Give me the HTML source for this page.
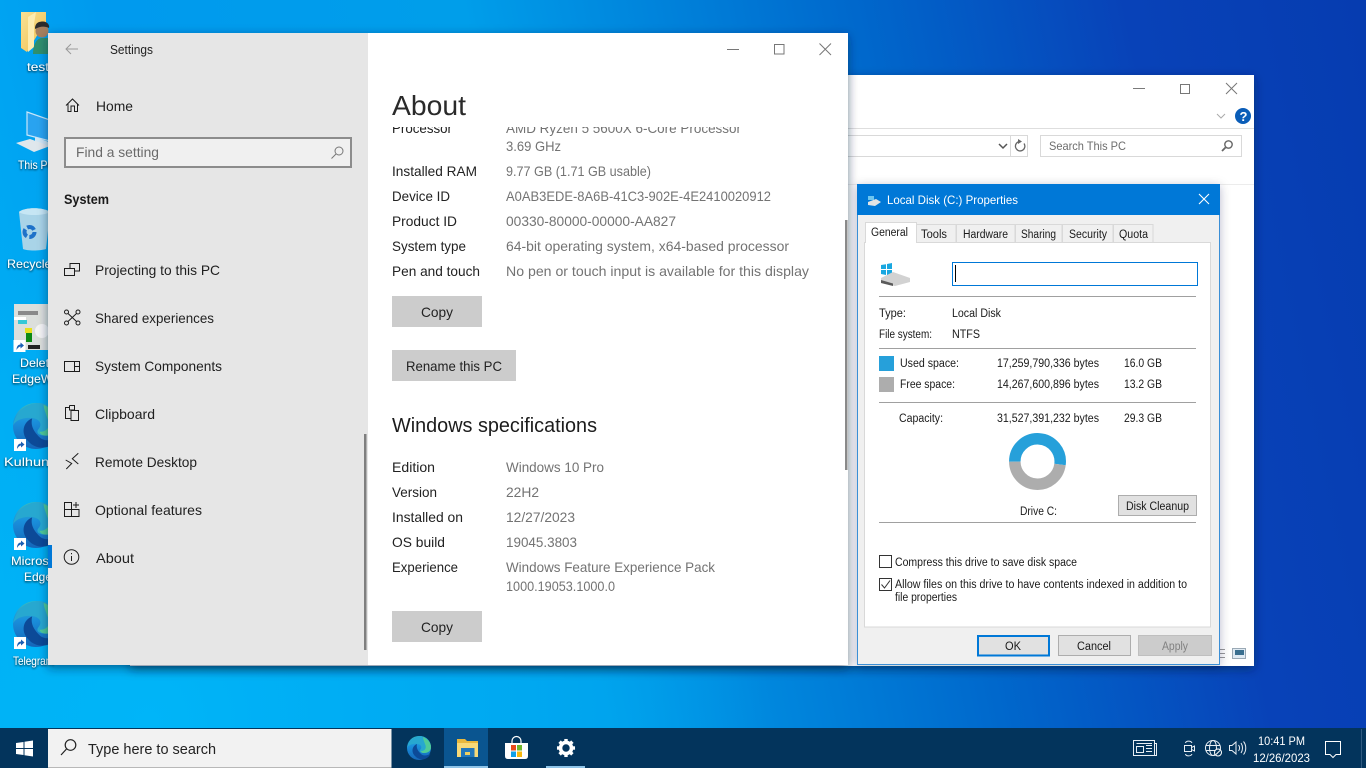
<!DOCTYPE html>
<html><head><meta charset="utf-8"><title>Settings</title>
<style>
html,body{margin:0;padding:0;width:1366px;height:768px;overflow:hidden;background:#0078d7}
svg{display:block;position:absolute;left:0;top:0}
text{font-family:"Liberation Sans",sans-serif;white-space:pre}
.n{font-size:14px;fill:#1f1f1f}
.l{font-size:14px;fill:#222}
.v{font-size:14px;fill:#737373}
.p{font-size:11.5px;fill:#1a1a1a}
.d{font-size:12px;fill:#fff}
.i{fill:none;stroke:#1c1c1c;stroke-width:1}
</style></head><body>
<svg width="1366" height="768" viewBox="0 0 1366 768" xmlns="http://www.w3.org/2000/svg">
<defs>
<linearGradient id="wall" gradientUnits="userSpaceOnUse" x1="-137" y1="28" x2="1312" y2="-268">
<stop offset="0" stop-color="#00b0f6"/><stop offset=".16" stop-color="#009aee"/><stop offset=".4" stop-color="#009eea"/><stop offset=".66" stop-color="#0068cc"/><stop offset=".84" stop-color="#0842b8"/><stop offset="1" stop-color="#063cb0"/>
</linearGradient>
<radialGradient id="glow" gradientUnits="userSpaceOnUse" cx="150" cy="720" r="620">
<stop offset="0" stop-color="#00b6f8" stop-opacity=".95"/><stop offset=".6" stop-color="#00b0f4" stop-opacity=".6"/><stop offset="1" stop-color="#00a8f0" stop-opacity="0"/>
</radialGradient>
<linearGradient id="eg" x1="0" y1="0" x2="0" y2="1"><stop offset="0" stop-color="#38bcc0"/><stop offset=".4" stop-color="#1a90dc"/><stop offset="1" stop-color="#1565b8"/></linearGradient>
<linearGradient id="fold" x1="0" y1="0" x2="1" y2="1"><stop offset="0" stop-color="#f9e196"/><stop offset="1" stop-color="#eebf4a"/></linearGradient>
<filter id="ts" x="-20%" y="-30%" width="140%" height="160%"><feDropShadow dx="0" dy="1" stdDeviation="1" flood-color="#000" flood-opacity=".9"/></filter>
<filter id="ws" x="-5%" y="-5%" width="110%" height="110%"><feDropShadow dx="0" dy="3" stdDeviation="5" flood-color="#001a40" flood-opacity=".55"/></filter>
<filter id="ds" x="-8%" y="-8%" width="116%" height="116%"><feDropShadow dx="0" dy="2" stdDeviation="5" flood-color="#001a40" flood-opacity=".28"/></filter>
<clipPath id="cp"><rect x="380" y="127" width="460" height="60"/></clipPath>
<symbol id="edge" viewBox="-12 -12 24 24" overflow="visible">
<circle r="12" fill="url(#eg)"/>
<path d="M-12 0C-11-7-5-12 1-12 7-12 12-7 12-1 12 3 9 5 5 5 2 5 0 4 1 2 3 0 3-3-1-4-6-5-11-3-12 0Z" fill="#27a8d0"/>
<path d="M4-11C9-9 12-5 12-1 12 3 9 5 5 5 3 5 2 4 2 3 6 3 8 0 6-4 5-7 4-9 4-11Z" fill="#4fcb98"/>
<path d="M-2-4C-7-2-8 4-4 8-1 11.500 4 12 7 10.500 9 9.500 10.500 8 11.500 5.500 8 8 4 8 2 6-1 3-3 0-2-4Z" fill="#0c4a98"/>
</symbol>
<symbol id="sc" viewBox="0 0 12 12"><rect width="12" height="12" fill="#fff"/><path d="M3 10C3 6 5 4.500 7 4.500V2.500L10.500 5.500 7 8.500V6.500C6 6.500 4.500 7.500 3 10Z" fill="#1a5fb4"/></symbol>
</defs>

<!-- wallpaper -->
<rect width="1366" height="768" fill="url(#wall)"/>
<rect width="800" height="768" fill="url(#glow)"/>

<!-- desktop icons -->
<g>
<path d="M21 12H46V34H38L27 52 21 48Z" fill="url(#fold)"/>
<path d="M36 12 28 17V52L34 47V24Z" fill="#fcecb0"/>
<path d="M33 54C33 44 37 38 42 38H50V54Z" fill="#2f8f6e"/>
<circle cx="42" cy="31" r="6.500" fill="#a5805f"/><path d="M35 29C35 22 40 21.500 43 21.500 47 21.500 50 25 49 28 45 26 40 26 35 29Z" fill="#2b2b2b"/>
<path d="M27 112 50 120V141L27 135Z" fill="#29a3f0" stroke="#c6e6fa" stroke-width="1.200"/>
<path d="M35 137 49 142V147L35 143Z" fill="#cfe6f5"/>
<path d="M16 143 30 139 50 146 34 152Z" fill="#dfe7ec"/>
<path d="M19 212C24 207 44 207 50 212L46 249C40 251 27 251 23 249Z" fill="#a9d4e8"/>
<path d="M19 212C24 216 44 216 50 212 44 207 24 207 19 212Z" fill="#c6e6f4"/>
<circle cx="29.500" cy="232" r="5" fill="none" stroke="#1e72c9" stroke-width="4" stroke-dasharray="8 2.500"/>
<rect x="14" y="304" width="36" height="46" fill="#dcdfdc"/>
<rect x="18" y="311" width="20" height="4" fill="#8a8a8a"/><rect x="14" y="317" width="12" height="3" fill="#fff"/><rect x="18" y="320" width="9" height="4" fill="#35c8d8"/><rect x="25" y="328" width="7" height="5" fill="#e8e020"/><rect x="26" y="333" width="6" height="9" fill="#0d8a14"/><circle cx="42" cy="331" r="7" fill="#f4f4f4"/><rect x="28" y="345" width="12" height="4" fill="#222"/>
<use href="#sc" x="13.500" y="340" width="12" height="12"/>
<use href="#edge" x="13" y="403" width="46" height="46"/><use href="#sc" x="14" y="439" width="12" height="12"/>
<use href="#edge" x="13" y="502" width="46" height="46"/><use href="#sc" x="14" y="538" width="12" height="12"/>
<use href="#edge" x="13" y="601" width="46" height="46"/><use href="#sc" x="14" y="637" width="12" height="12"/>
</g>
<g filter="url(#ts)">
<text class="d" x="27" y="71" textLength="22" lengthAdjust="spacingAndGlyphs">test</text>
<text class="d" x="18" y="169" textLength="37" lengthAdjust="spacingAndGlyphs">This PC</text>
<text class="d" x="7" y="268" textLength="66" lengthAdjust="spacingAndGlyphs">Recycle Bin</text>
<text class="d" x="20" y="367" textLength="36" lengthAdjust="spacingAndGlyphs">Delete</text>
<text class="d" x="12" y="383" textLength="54" lengthAdjust="spacingAndGlyphs">EdgeWeb</text>
<text class="d" x="4" y="466" textLength="62" lengthAdjust="spacingAndGlyphs">Kulhunter</text>
<text class="d" x="11" y="565" textLength="52" lengthAdjust="spacingAndGlyphs">Microsoft</text>
<text class="d" x="24" y="581" textLength="28" lengthAdjust="spacingAndGlyphs">Edge</text>
<text class="d" x="13" y="665" textLength="41" lengthAdjust="spacingAndGlyphs">Telegram</text>
</g>

<!-- Explorer window behind -->
<rect x="130" y="75" width="1124" height="591" fill="#fff" filter="url(#ws)"/>
<path d="M1133 88.500H1145" stroke="#7a7a7a" fill="none"/>
<rect x="1180.500" y="84.500" width="9" height="9" fill="none" stroke="#777"/>
<path d="M1226 83 1237 94M1237 83 1226 94" stroke="#777" fill="none"/>
<path d="M1217 114 1221 118 1225 114" stroke="#aaa" fill="none"/>
<circle cx="1243" cy="116" r="8" fill="#0a5db8"/>
<text x="1239.500" y="121" style="font-size:13px;font-weight:bold;fill:#fff">?</text>
<path d="M848 128.500H1254" stroke="#dedede"/>
<rect x="840" y="135.500" width="187.500" height="21" fill="#fff" stroke="#d9d9d9"/>
<path d="M1010.500 135V157" stroke="#d9d9d9"/>
<path d="M999 144 1003 148 1007 144" stroke="#555" stroke-width="1.500" fill="none"/>
<path d="M1024 143.500A4.700 4.700 0 1 1 1020 141.500" stroke="#666" stroke-width="1.300" fill="none"/><path d="M1018 139 1022 141.500 1018 144Z" fill="#666"/>
<rect x="1040.500" y="135.500" width="201" height="21" fill="#fff" stroke="#d9d9d9"/>
<text x="1049" y="150" textLength="77" lengthAdjust="spacingAndGlyphs" style="font-size:12px;fill:#6d6d6d">Search This PC</text>
<circle cx="1228.500" cy="144.500" r="3.700" fill="none" stroke="#666" stroke-width="1.400"/><path d="M1225.500 147.500 1222 151" stroke="#666" stroke-width="1.800"/>
<path d="M848 184.500H1254" stroke="#ececec"/>
<path d="M1217 649.500H1225M1217 653.500H1225M1217 657.500H1225" stroke="#999"/>
<rect x="1232.500" y="648.500" width="13" height="10" fill="#dfeaf3" stroke="#9aa9b5"/><rect x="1235" y="650" width="9" height="5" fill="#3a6f8f"/>

<!-- Settings window -->
<rect x="48" y="33" width="800" height="632" fill="#fff" filter="url(#ws)"/>
<rect x="48" y="33" width="320" height="632" fill="#e6e6e6"/>
<rect x="48" y="545" width="4" height="23" fill="#0078d7"/>
<path d="M78 49H66M71 44 66 49 71 54" stroke="#9a9a9a" fill="none"/>
<text x="110" y="54" textLength="43" lengthAdjust="spacingAndGlyphs" style="font-size:12.500px;fill:#222">Settings</text>
<path d="M66 105.500 72.500 99 79 105.500M68 104V111.500H71V106H74.500V111.500H77.500V104" class="i"/>
<text class="n" x="96" y="111" textLength="37" lengthAdjust="spacingAndGlyphs">Home</text>
<rect x="65" y="138" width="286" height="29" fill="#f0f0f0" stroke="#8c8c8c" stroke-width="2"/>
<text x="76" y="157" textLength="83" lengthAdjust="spacingAndGlyphs" style="font-size:14px;fill:#6a6a6a">Find a setting</text>
<circle cx="339" cy="151" r="4" fill="none" stroke="#777"/><path d="M336 154 331.500 158.500" stroke="#777" fill="none"/>
<text x="64" y="204" textLength="45" lengthAdjust="spacingAndGlyphs" style="font-size:14px;font-weight:bold;fill:#1a1a1a">System</text>

<path class="i" d="M70 268V263.500H79.500V271H74.500M64.500 268.500H74.500V275.500H64.500Z"/>
<text class="n" x="95" y="275" textLength="125" lengthAdjust="spacingAndGlyphs">Projecting to this PC</text>
<path class="i" d="M68 313.500 76.500 321.500M76.500 313.500 68 321.500"/><circle class="i" cx="66.500" cy="312" r="2"/><circle class="i" cx="78" cy="312" r="2"/><circle class="i" cx="66.500" cy="323" r="2"/><circle class="i" cx="78" cy="323" r="2"/>
<text class="n" x="95" y="323" textLength="119" lengthAdjust="spacingAndGlyphs">Shared experiences</text>
<path class="i" d="M64.500 361.500H79.500V371.500H64.500ZM74.500 361.500V371.500M74.500 366.500H79.500"/>
<text class="n" x="95" y="371" textLength="127" lengthAdjust="spacingAndGlyphs">System Components</text>
<path class="i" d="M71 418.500H65.500V407.500H69.500M74.500 407.500V409.500M69.500 405.500H74.500V410M69.500 405.500V410H74.500M71 410.500H78.500V420.500H71Z"/>
<text class="n" x="95" y="419" textLength="60" lengthAdjust="spacingAndGlyphs">Clipboard</text>
<path class="i" d="M65.700 460 71.700 463.500 66.300 469M78.300 453.300 72.300 458.700 78.300 464"/>
<text class="n" x="95" y="467" textLength="102" lengthAdjust="spacingAndGlyphs">Remote Desktop</text>
<path class="i" d="M64.500 502.500H71.500V516.500H64.500ZM64.500 509.500H79V516.500H71.500M76 502V508M73 505H79"/>
<text class="n" x="95" y="515" textLength="107" lengthAdjust="spacingAndGlyphs">Optional features</text>
<circle class="i" cx="71.500" cy="557" r="7.300"/><path class="i" d="M71.500 556V561M71.500 553V554.200"/>
<text class="n" x="96" y="563" textLength="38" lengthAdjust="spacingAndGlyphs">About</text>
<rect x="364" y="434" width="2.500" height="216" fill="#7f7f7f"/>

<!-- right pane -->
<path d="M727 49.500H739" stroke="#777" fill="none"/>
<rect x="774.500" y="44.500" width="9.500" height="9.500" fill="none" stroke="#777"/>
<path d="M819.500 43.500 831 55M831 43.500 819.500 55" stroke="#777" fill="none"/>
<text x="392" y="115" textLength="74" lengthAdjust="spacingAndGlyphs" style="font-size:27.500px;fill:#2a2a2a">About</text>
<g clip-path="url(#cp)">
<text class="l" x="392" y="133" textLength="60" lengthAdjust="spacingAndGlyphs">Processor</text>
<text class="v" x="506" y="133" textLength="235" lengthAdjust="spacingAndGlyphs">AMD Ryzen 5 5600X 6-Core Processor</text>
</g>
<text class="v" x="506" y="151" textLength="55" lengthAdjust="spacingAndGlyphs">3.69 GHz</text>
<text class="l" x="392" y="176" textLength="85" lengthAdjust="spacingAndGlyphs">Installed RAM</text>
<text class="v" x="506" y="176" textLength="145" lengthAdjust="spacingAndGlyphs">9.77 GB (1.71 GB usable)</text>
<text class="l" x="392" y="201" textLength="58" lengthAdjust="spacingAndGlyphs">Device ID</text>
<text class="v" x="506" y="201" textLength="265" lengthAdjust="spacingAndGlyphs">A0AB3EDE-8A6B-41C3-902E-4E2410020912</text>
<text class="l" x="392" y="226" textLength="65" lengthAdjust="spacingAndGlyphs">Product ID</text>
<text class="v" x="506" y="226" textLength="170" lengthAdjust="spacingAndGlyphs">00330-80000-00000-AA827</text>
<text class="l" x="392" y="251" textLength="74" lengthAdjust="spacingAndGlyphs">System type</text>
<text class="v" x="506" y="251" textLength="283" lengthAdjust="spacingAndGlyphs">64-bit operating system, x64-based processor</text>
<text class="l" x="392" y="276" textLength="88" lengthAdjust="spacingAndGlyphs">Pen and touch</text>
<text class="v" x="506" y="276" textLength="303" lengthAdjust="spacingAndGlyphs">No pen or touch input is available for this display</text>
<rect x="392" y="296" width="90" height="31" fill="#ccc"/>
<text class="l" x="421" y="317" textLength="32" lengthAdjust="spacingAndGlyphs">Copy</text>
<rect x="392" y="350" width="124" height="31" fill="#ccc"/>
<text class="l" x="406" y="371" textLength="96" lengthAdjust="spacingAndGlyphs">Rename this PC</text>
<text x="392" y="432" textLength="205" lengthAdjust="spacingAndGlyphs" style="font-size:20px;fill:#1c1c1c">Windows specifications</text>
<text class="l" x="392" y="472" textLength="43" lengthAdjust="spacingAndGlyphs">Edition</text>
<text class="v" x="506" y="472" textLength="98" lengthAdjust="spacingAndGlyphs">Windows 10 Pro</text>
<text class="l" x="392" y="497" textLength="45" lengthAdjust="spacingAndGlyphs">Version</text>
<text class="v" x="506" y="497" textLength="33" lengthAdjust="spacingAndGlyphs">22H2</text>
<text class="l" x="392" y="522" textLength="71" lengthAdjust="spacingAndGlyphs">Installed on</text>
<text class="v" x="506" y="522" textLength="69" lengthAdjust="spacingAndGlyphs">12/27/2023</text>
<text class="l" x="392" y="547" textLength="53" lengthAdjust="spacingAndGlyphs">OS build</text>
<text class="v" x="506" y="547" textLength="71" lengthAdjust="spacingAndGlyphs">19045.3803</text>
<text class="l" x="392" y="572" textLength="66" lengthAdjust="spacingAndGlyphs">Experience</text>
<text class="v" x="506" y="572" textLength="209" lengthAdjust="spacingAndGlyphs">Windows Feature Experience Pack</text>
<text class="v" x="506" y="591" textLength="109" lengthAdjust="spacingAndGlyphs">1000.19053.1000.0</text>
<rect x="392" y="611" width="90" height="31" fill="#ccc"/>
<text class="l" x="421" y="632" textLength="32" lengthAdjust="spacingAndGlyphs">Copy</text>
<rect x="845" y="220" width="2.500" height="250" fill="#8a8a8a"/>

<!-- Properties dialog -->
<rect x="857.500" y="184.500" width="362" height="480" fill="#f0f0f0" stroke="#3a8fd6" filter="url(#ds)"/>
<rect x="857" y="184" width="363" height="31" fill="#0078d7"/>
<path d="M868 196H874V200H868Z" fill="#6ec6f0"/><path d="M868 202 876 199 881 202 875 206 868 205Z" fill="#e4e4e4"/>
<text x="887" y="204" textLength="131" lengthAdjust="spacingAndGlyphs" style="font-size:12px;fill:#fff">Local Disk (C:) Properties</text>
<path d="M1199 194 1209 204M1209 194 1199 204" stroke="#fff" stroke-width="1.100" fill="none"/>

<rect x="864.500" y="242.500" width="346" height="384.500" fill="#fff" stroke="#d9d9d9"/>
<g fill="#f0f0f0" stroke="#d9d9d9">
<rect x="916.500" y="224.500" width="39.500" height="18"/>
<rect x="956.500" y="224.500" width="58.500" height="18"/>
<rect x="1015.500" y="224.500" width="46.500" height="18"/>
<rect x="1062.500" y="224.500" width="50.500" height="18"/>
<rect x="1113.500" y="224.500" width="39.500" height="18"/>
</g>
<path d="M865.500 243V222.500H916.500V243" fill="#fff" stroke="#d9d9d9"/>
<text class="p" x="871" y="236" textLength="37" lengthAdjust="spacingAndGlyphs">General</text>
<text class="p" x="921" y="238" textLength="26" lengthAdjust="spacingAndGlyphs">Tools</text>
<text class="p" x="963" y="238" textLength="45" lengthAdjust="spacingAndGlyphs">Hardware</text>
<text class="p" x="1021" y="238" textLength="35" lengthAdjust="spacingAndGlyphs">Sharing</text>
<text class="p" x="1069" y="238" textLength="38" lengthAdjust="spacingAndGlyphs">Security</text>
<text class="p" x="1119" y="238" textLength="29" lengthAdjust="spacingAndGlyphs">Quota</text>

<path d="M881 265 886 264.200V269H881ZM887 264 892 263V269H887ZM881 270H886V275L881 274ZM887 270H892V276L887 275Z" fill="#19a7e0"/>
<path d="M881 278 893 272 910 278V282L895 286 881 283Z" fill="#d2d2d2"/><path d="M881 280 893 283.500V286L881 283Z" fill="#5a5a5a"/>
<rect x="952.500" y="262.500" width="245" height="23" fill="#fff" stroke="#0078d7"/>
<path d="M955.500 265V282" stroke="#000"/>
<g stroke="#a0a0a0"><path d="M879 296.500H1196M879 348.500H1196M879 402.500H1196M879 522.500H1196"/></g>
<text class="p" x="879" y="317" textLength="27" lengthAdjust="spacingAndGlyphs">Type:</text>
<text class="p" x="952" y="317" textLength="49" lengthAdjust="spacingAndGlyphs">Local Disk</text>
<text class="p" x="879" y="338" textLength="53" lengthAdjust="spacingAndGlyphs">File system:</text>
<text class="p" x="952" y="338" textLength="28" lengthAdjust="spacingAndGlyphs">NTFS</text>
<rect x="879" y="356" width="15" height="15" fill="#26a0da"/>
<rect x="879" y="377" width="15" height="15" fill="#adadad"/>
<text class="p" x="900" y="367" textLength="59" lengthAdjust="spacingAndGlyphs">Used space:</text>
<text class="p" x="997" y="367" textLength="102" lengthAdjust="spacingAndGlyphs">17,259,790,336 bytes</text>
<text class="p" x="1124" y="367" textLength="38" lengthAdjust="spacingAndGlyphs">16.0 GB</text>
<text class="p" x="900" y="388" textLength="55" lengthAdjust="spacingAndGlyphs">Free space:</text>
<text class="p" x="997" y="388" textLength="102" lengthAdjust="spacingAndGlyphs">14,267,600,896 bytes</text>
<text class="p" x="1124" y="388" textLength="38" lengthAdjust="spacingAndGlyphs">13.2 GB</text>
<text class="p" x="899" y="422" textLength="44" lengthAdjust="spacingAndGlyphs">Capacity:</text>
<text class="p" x="997" y="422" textLength="102" lengthAdjust="spacingAndGlyphs">31,527,391,232 bytes</text>
<text class="p" x="1124" y="422" textLength="38" lengthAdjust="spacingAndGlyphs">29.3 GB</text>
<path d="M1014.800 461.700A22.700 22.700 0 1 1 1060 464.500" fill="none" stroke="#26a0da" stroke-width="11.500"/>
<path d="M1060 464.500A22.700 22.700 0 0 1 1014.800 461.700" fill="none" stroke="#adadad" stroke-width="11.500"/>
<text class="p" x="1020" y="515" textLength="37" lengthAdjust="spacingAndGlyphs">Drive C:</text>
<rect x="1118.500" y="495.500" width="78" height="20" fill="#e1e1e1" stroke="#adadad"/>
<text class="p" x="1126" y="510" textLength="63" lengthAdjust="spacingAndGlyphs">Disk Cleanup</text>
<rect x="879.500" y="555.500" width="12" height="12" fill="#fff" stroke="#333"/>
<text class="p" x="895" y="566" textLength="182" lengthAdjust="spacingAndGlyphs">Compress this drive to save disk space</text>
<rect x="879.500" y="578.500" width="12" height="12" fill="#fff" stroke="#333"/>
<path d="M881.500 584.500 884.500 588 890 580.500" fill="none" stroke="#333"/>
<text class="p" x="895" y="588" textLength="292" lengthAdjust="spacingAndGlyphs">Allow files on this drive to have contents indexed in addition to</text>
<text class="p" x="895" y="601" textLength="62" lengthAdjust="spacingAndGlyphs">file properties</text>
<rect x="978" y="636" width="71" height="19.500" fill="#e1e1e1" stroke="#0078d7" stroke-width="2"/>
<text class="p" x="1005" y="650" textLength="16" lengthAdjust="spacingAndGlyphs">OK</text>
<rect x="1058.500" y="635.500" width="72" height="20" fill="#e1e1e1" stroke="#adadad"/>
<text class="p" x="1077" y="650" textLength="34" lengthAdjust="spacingAndGlyphs">Cancel</text>
<rect x="1138.500" y="635.500" width="73" height="20" fill="#ccc" stroke="#bfbfbf"/>
<text x="1162" y="650" textLength="26" lengthAdjust="spacingAndGlyphs" style="font-size:11.500px;fill:#808080">Apply</text>

<!-- taskbar -->
<rect y="728" width="1366" height="40" fill="#03345c"/>
<path d="M16 743 23.500 742V748H16ZM24.500 741.800 33 740.500V748H24.500ZM16 749H23.500V755L16 754ZM24.500 749H33V756.500L24.500 755.200Z" fill="#fff"/>
<rect x="48" y="729" width="343.500" height="39" fill="#f2f2f2"/>
<rect x="48" y="767" width="343.500" height="1" fill="#b8b8b8"/>
<circle cx="70.500" cy="745" r="5.300" fill="none" stroke="#222" stroke-width="1.200"/><path d="M66.500 749 61 755" stroke="#222" stroke-width="1.200" fill="none"/>
<text x="88" y="754" textLength="128" lengthAdjust="spacingAndGlyphs" style="font-size:15px;fill:#222">Type here to search</text>
<use href="#edge" x="407" y="736" width="24" height="24"/>
<rect x="444" y="728" width="44" height="40" fill="#0a5590"/>
<rect x="444" y="766" width="44" height="2" fill="#8fc4e8"/>
<path d="M457 739H465L467 741H478V757H457Z" fill="#e8b83e"/><path d="M457 743H478V757H457Z" fill="#f7d978"/><rect x="461" y="748" width="13.500" height="9" fill="#2277bb"/><rect x="465" y="752" width="5" height="3" fill="#f0d060"/>
<path d="M505 743H528V756Q528 759 525 759H508Q505 759 505 756Z" fill="#fff"/><path d="M512 743V741A4.500 4.500 0 0 1 521 741V743" fill="none" stroke="#fff" stroke-width="1.200"/>
<rect x="511" y="745" width="5" height="5.500" fill="#e74a1d"/><rect x="517" y="745" width="5" height="5.500" fill="#6fb62c"/><rect x="511" y="751.500" width="5" height="5.500" fill="#12a0e8"/><rect x="517" y="751.500" width="5" height="5.500" fill="#f8b80d"/>
<g transform="translate(566 748) scale(.95)">
<circle r="5.800" fill="none" stroke="#fff" stroke-width="3.800"/>
<g fill="#fff"><rect x="-1.800" y="-9.500" width="3.600" height="4"/><rect x="-1.800" y="5.500" width="3.600" height="4"/><rect x="-9.500" y="-1.800" width="4" height="3.600"/><rect x="5.500" y="-1.800" width="4" height="3.600"/>
<rect x="-1.800" y="-9.500" width="3.600" height="4" transform="rotate(45)"/><rect x="-1.800" y="5.500" width="3.600" height="4" transform="rotate(45)"/><rect x="-9.500" y="-1.800" width="4" height="3.600" transform="rotate(45)"/><rect x="5.500" y="-1.800" width="4" height="3.600" transform="rotate(45)"/></g>
</g>
<rect x="546" y="766" width="39" height="2" fill="#8fc4e8"/>
<!-- tray -->
<g fill="none" stroke="#e8eef4" stroke-width="1">
<path d="M1133.500 740.500H1154.500V755.500H1133.500ZM1154.500 743.500H1156.500V755.500H1154.500M1136.500 746.500H1143.500V752.500H1136.500ZM1146 745.500H1152M1146 748.500H1152M1146 751.500H1152M1136.500 743.500H1152"/>
<path d="M1185.500 743C1186 740.500 1191 740.500 1192 743M1185.500 754C1186 756.500 1191 756.500 1192 754M1184.500 745.500H1191.500V751.500H1184.500ZM1191.500 747.500 1194.500 746V751L1191.500 749.500"/>
<circle cx="1213" cy="748" r="7.500"/><ellipse cx="1213" cy="748" rx="3.500" ry="7.500"/><path d="M1206 745.500H1220M1206 750.500H1220"/>
<path d="M1229.500 745.500H1232L1236 742V754L1232 750.500H1229.500ZM1238.500 745C1240 747 1240 749 1238.500 751M1241 743C1243 746 1243 750 1241 753M1243.500 741.500C1246.500 745 1246.500 751 1243.500 754.500"/>
</g>
<circle cx="1218" cy="752.500" r="3.500" fill="#03345c" stroke="#fff"/><path d="M1216 754.500 1220 750.500" stroke="#fff"/>
<text x="1258" y="745" textLength="47" lengthAdjust="spacingAndGlyphs" style="font-size:12px;fill:#fff">10:41 PM</text>
<text x="1253" y="762" textLength="57" lengthAdjust="spacingAndGlyphs" style="font-size:12px;fill:#fff">12/26/2023</text>
<path d="M1325.500 741.500H1340.500V754.500H1336L1333 757.500 1330 754.500H1325.500Z" fill="none" stroke="#fff"/>
<path d="M1361.500 729V768" stroke="#2f5a80"/>
</svg>
</body></html>
